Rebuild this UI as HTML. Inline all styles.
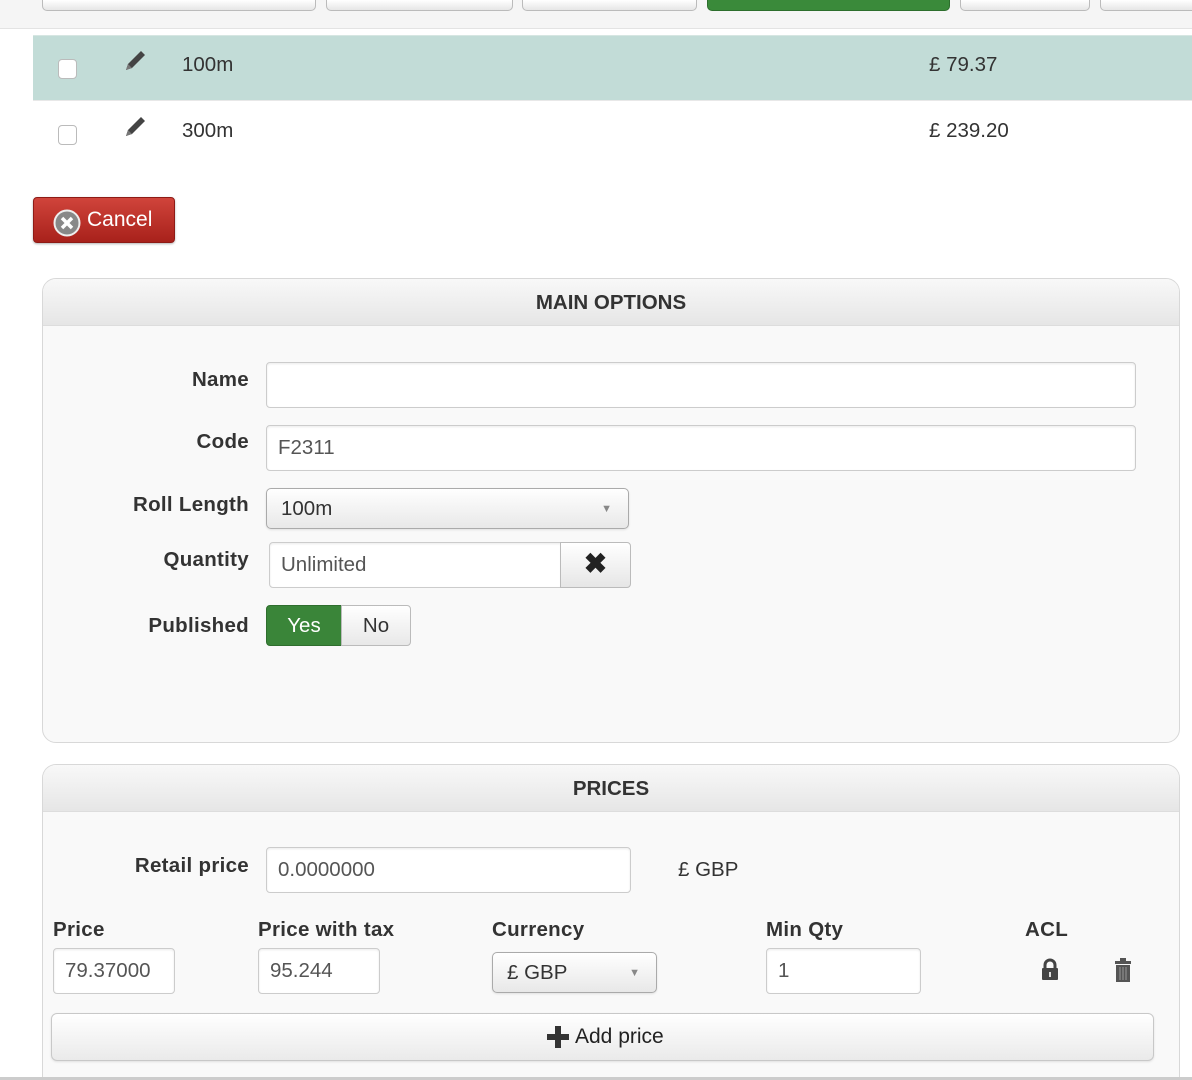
<!DOCTYPE html>
<html><head><meta charset="utf-8"><style>
*{box-sizing:border-box;margin:0;padding:0}
html,body{width:1192px;height:1080px;overflow:hidden}
body{background:#fff;font-family:"Liberation Sans",sans-serif;color:#333;position:relative;font-size:20.5px}
.a{position:absolute}
.tb{background:linear-gradient(#fff,#e6e6e6);border:1px solid #bbb;border-top:none;border-radius:0 0 5px 5px;height:11px;top:0}
.inp{position:absolute;background:#fff;border:1px solid #ccc;border-radius:4px;box-shadow:inset 0 1px 2px rgba(0,0,0,.08);padding-left:11px;display:flex;align-items:center;color:#555;font-size:20.5px}
.sel{position:absolute;background:linear-gradient(#fff,#e8e8e8);border:1px solid #aaa;border-radius:5px;padding-left:14px;display:flex;align-items:center;color:#333;box-shadow:0 1px 2px rgba(0,0,0,.1)}
.sel:after{content:"▼";position:absolute;right:16px;font-size:11px;color:#888}
.lbl{position:absolute;font-weight:bold;text-align:right;width:220px;font-size:20.5px;color:#333;letter-spacing:0.3px}
.panel{position:absolute;left:42px;width:1138px;background:#f9f9f9;border:1px solid #d8d8d8;border-radius:14px;overflow:hidden}
.ph{height:47px;background:linear-gradient(#f8f8f8,#e6e6e6);border-bottom:1px solid #ddd;text-align:center;font-weight:bold;line-height:48px;font-size:20.5px;color:#333}
.cl{position:absolute;font-weight:bold;font-size:20.5px;letter-spacing:0.3px}
</style></head><body>
<div class="a" style="left:0;top:0;width:1192px;height:29px;background:#f5f5f5;border-bottom:1px solid #e3e3e3"></div>
<div class="a tb" style="left:42px;width:274px"></div>
<div class="a tb" style="left:326px;width:187px"></div>
<div class="a tb" style="left:522px;width:175px"></div>
<div class="a tb" style="left:707px;width:243px;background:#3a8a3a;border-color:#2d6e2d"></div>
<div class="a tb" style="left:960px;width:130px"></div>
<div class="a tb" style="left:1100px;width:100px"></div>

<div class="a" style="left:33px;top:35px;width:1159px;height:66px;background:#c2dcd7;border-top:1px solid #d6e6e2;border-bottom:1px solid #e8e8e8"></div>
<div class="a" style="left:58px;top:59px;width:19px;height:20px;background:#fff;border:1px solid #bbb;border-radius:4px"></div>
<div class="a" style="left:58px;top:125px;width:19px;height:20px;background:#fff;border:1px solid #bbb;border-radius:4px"></div>
<svg class="a" style="left:122px;top:49px" width="26" height="26" viewBox="0 0 26 26"><path d="M4 21 L6 15 L19 2 L23 6 L10 19 Z" fill="#444"/><path d="M4 21 L6 15 L10 19Z" fill="#777"/></svg>
<svg class="a" style="left:122px;top:115px" width="26" height="26" viewBox="0 0 26 26"><path d="M4 21 L6 15 L19 2 L23 6 L10 19 Z" fill="#444"/><path d="M4 21 L6 15 L10 19Z" fill="#777"/></svg>
<div class="a" style="left:182px;top:53px">100m</div>
<div class="a" style="left:182px;top:119px">300m</div>
<div class="a" style="left:929px;top:53px">£ 79.37</div>
<div class="a" style="left:929px;top:119px">£ 239.20</div>

<div class="a" style="left:33px;top:197px;width:142px;height:46px;background:linear-gradient(#d0443b,#a8211b);border:1px solid #8e1b16;border-radius:4px;color:#fff;box-shadow:0 1px 2px rgba(0,0,0,.3)">
<svg class="a" style="left:19px;top:11px" width="28" height="28" viewBox="0 0 28 28"><circle cx="14" cy="14" r="12.5" fill="#888" stroke="#eee" stroke-width="2"/><path d="M9 9 L19 19 M19 9 L9 19" stroke="#fff" stroke-width="3.5"/></svg>
<div class="a" style="left:53px;top:10px;font-size:21px">Cancel</div></div>

<div class="panel" style="top:278px;height:465px"><div class="ph">MAIN OPTIONS</div></div>
<div class="lbl" style="left:29px;top:368px">Name</div>
<div class="inp" style="left:266px;top:362px;width:870px;height:46px"></div>
<div class="lbl" style="left:29px;top:430px">Code</div>
<div class="inp" style="left:266px;top:425px;width:870px;height:46px">F2311</div>
<div class="lbl" style="left:29px;top:493px">Roll Length</div>
<div class="sel" style="left:266px;top:488px;width:363px;height:41px">100m</div>
<div class="lbl" style="left:29px;top:548px">Quantity</div>
<div class="inp" style="left:269px;top:542px;width:293px;height:46px;border-radius:4px 0 0 4px">Unlimited</div>
<div class="a" style="left:560px;top:542px;width:71px;height:46px;background:linear-gradient(#fff,#e6e6e6);border:1px solid #bbb;border-radius:0 4px 4px 0;text-align:center;line-height:42px;font-size:28px;font-weight:bold;color:#222">✖</div>
<div class="lbl" style="left:29px;top:614px">Published</div>
<div class="a" style="left:266px;top:605px;width:76px;height:41px;background:#3a8539;border:1px solid #2f6e2e;border-radius:4px 0 0 4px;color:#fff;text-align:center;line-height:39px">Yes</div>
<div class="a" style="left:341px;top:605px;width:70px;height:41px;background:linear-gradient(#fff,#e8e8e8);border:1px solid #bbb;border-radius:0 4px 4px 0;text-align:center;line-height:39px">No</div>

<div class="panel" style="top:764px;height:316px;border-bottom:none;border-radius:14px 14px 0 0"><div class="ph">PRICES</div></div>
<div class="lbl" style="left:29px;top:854px">Retail price</div>
<div class="inp" style="left:266px;top:847px;width:365px;height:46px">0.0000000</div>
<div class="a" style="left:678px;top:858px">£ GBP</div>
<div class="cl" style="left:53px;top:918px">Price</div>
<div class="cl" style="left:258px;top:918px">Price with tax</div>
<div class="cl" style="left:492px;top:918px">Currency</div>
<div class="cl" style="left:766px;top:918px">Min Qty</div>
<div class="cl" style="left:1025px;top:918px">ACL</div>
<div class="inp" style="left:53px;top:948px;width:122px;height:46px">79.37000</div>
<div class="inp" style="left:258px;top:948px;width:122px;height:46px">95.244</div>
<div class="sel" style="left:492px;top:952px;width:165px;height:41px">£ GBP</div>
<div class="inp" style="left:766px;top:948px;width:155px;height:46px">1</div>
<svg class="a" style="left:1039px;top:958px" width="22" height="24" viewBox="0 0 22 24"><path d="M6 11 V7 a5 5 0 0 1 10 0 V11" fill="none" stroke="#444" stroke-width="3"/><rect x="3" y="10" width="16" height="12" rx="1" fill="#444"/><rect x="10" y="14" width="2" height="5" fill="#ddd"/></svg>
<svg class="a" style="left:1113px;top:957px" width="20" height="26" viewBox="0 0 20 26"><rect x="7" y="1" width="6" height="3" fill="#555"/><rect x="2" y="4" width="16" height="3" fill="#555"/><rect x="3" y="8" width="14" height="17" fill="#555"/><path d="M7 10V23M10 10V23M13 10V23" stroke="#999" stroke-width="1"/></svg>
<div class="a" style="left:51px;top:1013px;width:1103px;height:48px;background:linear-gradient(#fff,#eaeaea);border:1px solid #c8c8c8;border-radius:6px;box-shadow:0 1px 2px rgba(0,0,0,.1)">
<svg class="a" style="left:494px;top:11px" width="24" height="24" viewBox="0 0 24 24"><path d="M9 1h6v8h8v6h-8v8H9v-8H1V9h8z" fill="#333"/></svg>
<div class="a" style="left:523px;top:11px;font-size:21px;color:#222">Add price</div></div>
<div class="a" style="left:0;top:1077px;width:1192px;height:3px;background:#ccc"></div>
</body></html>
